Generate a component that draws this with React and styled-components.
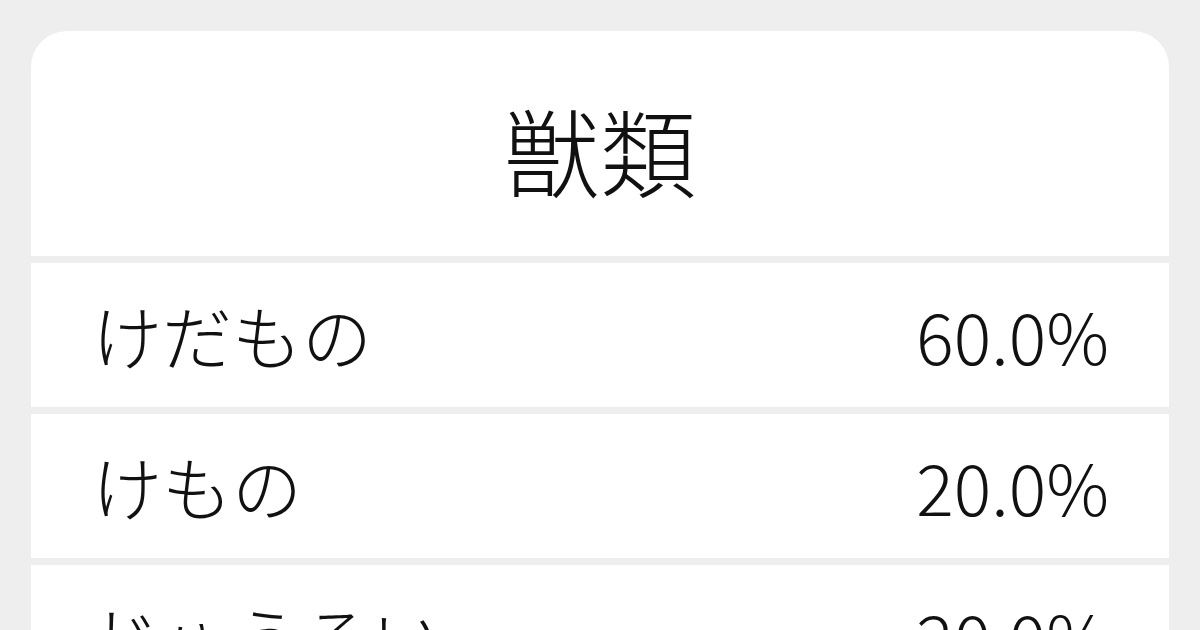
import styled, { createGlobalStyle } from 'styled-components';

const GlobalStyle = createGlobalStyle`
  html, body {
    margin: 0;
    padding: 0;
    background: #eeeeee;
    font-family: "Noto Sans CJK JP", "Noto Sans", sans-serif;
    color: #111111;
  }
`;

const Page = styled.div`
  width: 1200px;
  height: 630px;
  overflow: hidden;
  padding: 31px 31px 0;
  box-sizing: border-box;
`;

const Card = styled.div`
  background: #eeeeee;
  border-radius: 36px 36px 0 0;
  overflow: hidden;
  display: flex;
  flex-direction: column;
  gap: 7px;
`;

const Title = styled.h1`
  margin: 0;
  height: 225px;
  background: #ffffff;
  display: flex;
  align-items: center;
  justify-content: center;
  padding-top: 10px;
  box-sizing: border-box;
  font-size: 96px;
  font-weight: 300;
  line-height: 1;
`;

const Row = styled.div`
  height: 144px;
  background: #ffffff;
  display: flex;
  align-items: center;
  justify-content: space-between;
  padding: 0 60px 0 61px;
  box-sizing: border-box;
  font-size: 70px;
  font-weight: 300;
  line-height: 1;
`;

const Reading = styled.span``;
const Ratio = styled.span``;

const rows = [
  { reading: 'けだもの', ratio: '60.0%' },
  { reading: 'けもの', ratio: '20.0%' },
  { reading: 'じゅうるい', ratio: '20.0%' },
];

export default function App() {
  return (
    <>
      <GlobalStyle />
      <Page>
        <Card>
          <Title>獣類</Title>
          {rows.map((r) => (
            <Row key={r.reading}>
              <Reading>{r.reading}</Reading>
              <Ratio>{r.ratio}</Ratio>
            </Row>
          ))}
        </Card>
      </Page>
    </>
  );
}
